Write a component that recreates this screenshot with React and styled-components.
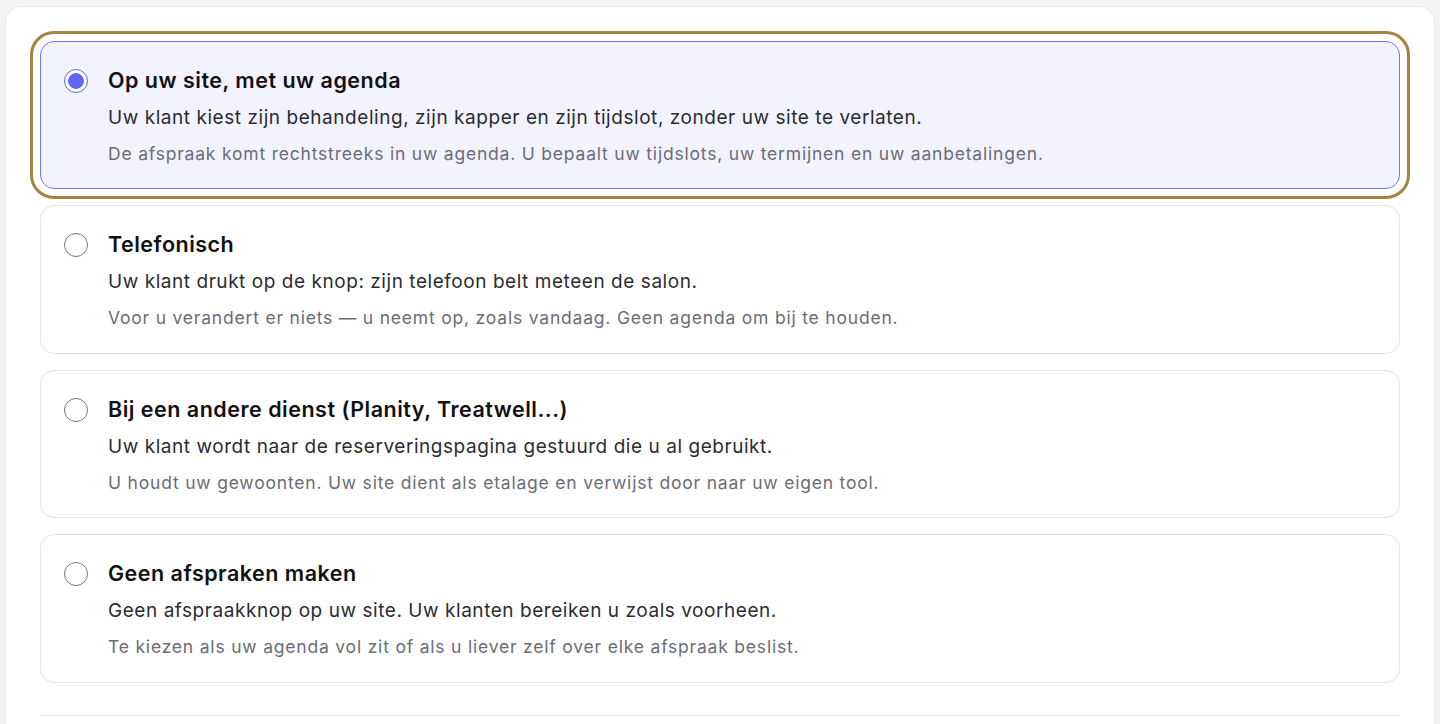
import React, { useState } from 'react'
import styled, { createGlobalStyle } from 'styled-components'

const GlobalStyle = createGlobalStyle`
  html, body {
    margin: 0;
    padding: 0;
    background: #f4f4f5;
    font-family: Inter, "Noto Sans", sans-serif;
    -webkit-font-smoothing: antialiased;
  }
  * { box-sizing: border-box; }
`

const options = [
  {
    id: 'site',
    title: 'Op uw site, met uw agenda',
    text: 'Uw klant kiest zijn behandeling, zijn kapper en zijn tijdslot, zonder uw site te verlaten.',
    note: 'De afspraak komt rechtstreeks in uw agenda. U bepaalt uw tijdslots, uw termijnen en uw aanbetalingen.',
  },
  {
    id: 'phone',
    title: 'Telefonisch',
    text: 'Uw klant drukt op de knop: zijn telefoon belt meteen de salon.',
    note: 'Voor u verandert er niets — u neemt op, zoals vandaag. Geen agenda om bij te houden.',
  },
  {
    id: 'other',
    title: 'Bij een andere dienst (Planity, Treatwell...)',
    text: 'Uw klant wordt naar de reserveringspagina gestuurd die u al gebruikt.',
    note: 'U houdt uw gewoonten. Uw site dient als etalage en verwijst door naar uw eigen tool.',
  },
  {
    id: 'none',
    title: 'Geen afspraken maken',
    text: 'Geen afspraakknop op uw site. Uw klanten bereiken u zoals voorheen.',
    note: 'Te kiezen als uw agenda vol zit of als u liever zelf over elke afspraak beslist.',
  },
]

const App = () => {
  const [selected, setSelected] = useState('site')
  return (
    <Page>
      <GlobalStyle />
      <Panel>
        <OptionList>
          {options.map((o) => (
            <OptionCard
              key={o.id}
              $active={selected === o.id}
              onClick={() => setSelected(o.id)}
            >
              <Radio $active={selected === o.id} />
              <OptionBody>
                <OptionTitle>{o.title}</OptionTitle>
                <OptionText>{o.text}</OptionText>
                <OptionNote>{o.note}</OptionNote>
              </OptionBody>
            </OptionCard>
          ))}
        </OptionList>
        <Divider />
      </Panel>
    </Page>
  )
}

const Page = styled.div`
  padding: 6px 5px 0;
  min-height: 100vh;
`

const Panel = styled.div`
  background: #ffffff;
  border: 1px solid #e7e7e9;
  border-radius: 16px;
  padding: 34px 34px 40px;
`

const OptionList = styled.div`
  display: flex;
  flex-direction: column;
  gap: 16px;
`

const OptionCard = styled.div`
  display: flex;
  align-items: flex-start;
  gap: 20px;
  padding: 24px 23px 22.4px;
  border-radius: 14px;
  border: 1px solid ${(p) => (p.$active ? '#7376ee' : '#e4e4e7')};
  background: ${(p) => (p.$active ? '#f2f3fe' : '#ffffff')};
  outline: ${(p) => (p.$active ? '3px solid #a6823e' : 'none')};
  outline-offset: 7px;
  cursor: pointer;
`

const Radio = styled.span`
  flex: none;
  width: 24px;
  height: 24px;
  margin-top: 3px;
  border-radius: 50%;
  border: ${(p) => (p.$active ? '1.5px solid #6366f1' : '1.5px solid #76767c')};
  background: ${(p) =>
    p.$active
      ? 'radial-gradient(circle, #6366f1 0 7.5px, #ffffff 8.1px)'
      : '#ffffff'};
`

const OptionBody = styled.div`
  display: flex;
  flex-direction: column;
`

const OptionTitle = styled.div`
  font-size: 21.5px;
  line-height: 28px;
  font-weight: 600;
  letter-spacing: 0.5px;
  color: #111114;
`

const OptionText = styled.div`
  margin-top: 10px;
  font-size: 19px;
  line-height: 28px;
  letter-spacing: 0.55px;
  color: #2c2c33;
`

const OptionNote = styled.div`
  margin-top: 10px;
  font-size: 17.5px;
  line-height: 24px;
  letter-spacing: 0.8px;
  color: #6c6c78;
`

const Divider = styled.div`
  margin-top: 32px;
  height: 1px;
  background: #e4e4e7;
`

export default App
